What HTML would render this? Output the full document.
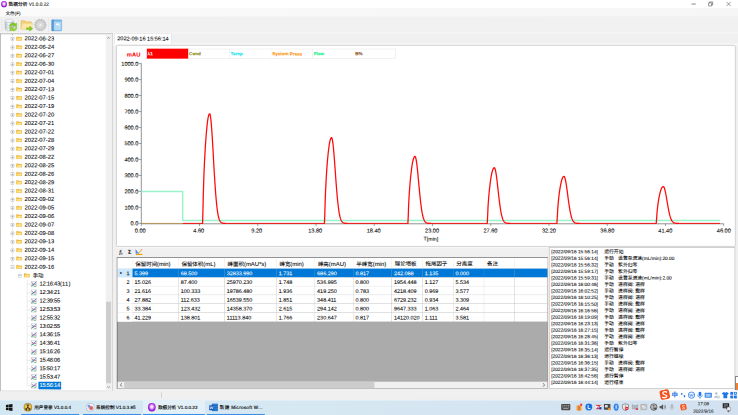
<!DOCTYPE html><html lang="zh-CN"><head><meta charset="utf-8"><title>数据分析 V1.0.0.22</title><style>
*{box-sizing:border-box;margin:0;padding:0}
html,body{width:738px;height:415px;overflow:hidden;background:#f0f0f0}
body{font-family:"Liberation Sans","Noto Sans CJK SC",sans-serif;color:#000;text-rendering:geometricPrecision;-webkit-text-stroke-width:0.18px}
#app{position:absolute;left:0;top:0;width:1920px;height:1080px;transform:scale(0.384375);transform-origin:0 0;background:#f0f0f0;overflow:hidden}
.abs{position:absolute}
.t,.tr,.yl,.xl,.ll,.r{transform:rotate(0.1deg);transform-origin:0 50%}
.r{display:inline-block}
.t{position:absolute;white-space:nowrap;line-height:1}
#title{left:0;top:0;width:1920px;height:21px;background:#fff}
#menu{left:0;top:21px;width:1920px;height:23px;background:linear-gradient(90deg,#fbfbfb,#f7f7f7 60%,#f6f6f6)}
#tool{left:0;top:43px;width:1920px;height:44px;background:#f1f1f1;border-bottom:2px solid #fafafa}
#tree{left:0;top:87px;width:294px;height:931px;background:#fff;border:2px solid #acacac;border-right:2px solid #c0c0c0;border-bottom:2px solid #d8d8d8}
.tr{position:absolute;left:0;height:22px;font-size:15px;line-height:22px;white-space:nowrap}
.pm{position:absolute;width:9px;height:9px;border:1px solid #a8a8a8;background:#fff}
.pm:before{content:"";position:absolute;left:1px;top:3px;width:5px;height:1px;background:#5a6da8}
.pm.plus:after{content:"";position:absolute;left:3px;top:1px;width:1px;height:5px;background:#5a6da8}
.fold{position:absolute;width:16px;height:12px}
.dot{position:absolute;border-left:1px dotted #a0a0a0}
.doth{position:absolute;border-top:1px dotted #a0a0a0}
.sb{background:#f0f0f0}
.thumb{background:#cdcdcd}
#tab{left:298px;top:87px;width:148px;height:28px;background:#fff;border:1px solid #d0d0d0;border-bottom:none;font-size:13.5px}
#chart{left:302px;top:117px;width:1612px;height:525px;background:#fff;border:2px solid #c8c8c8;border-radius:3px}
.yl{position:absolute;font-size:14.5px;line-height:14px;width:60px;text-align:right;white-space:nowrap}
.xl{position:absolute;font-size:14.5px;line-height:14px;width:80px;text-align:center;white-space:nowrap}
.lg{position:absolute;top:127px;height:25px;width:108px;border:1px solid #dcdcdc;border-left:none;font-size:12px;font-weight:bold;line-height:25px;padding-left:2px;white-space:nowrap;background:#fff}
#grid{left:304px;top:669px;width:1121px;height:342px;background:#ababab;border:1px solid #6e6e6e;border-left:2px solid #6e6e6e;border-top:2px solid #6e6e6e}
.hc{position:absolute;top:0;height:28px;background:#fff;border-right:1px solid #dedede;border-bottom:1px solid #dedede;font-size:14.2px;line-height:33px;text-align:left;padding-left:7px;white-space:nowrap;overflow:hidden}
.c{position:absolute;height:23px;background:#fff;border-right:1px solid #a9a9a9;border-bottom:1px solid #a9a9a9;font-size:14.1px;line-height:24px;padding-left:5px;white-space:nowrap;overflow:hidden}
.c.sel{background:#0078d7;color:#fff}
.rh{position:absolute;left:0;width:39px;height:23px;background:#fff;border-right:1px solid #dedede;border-bottom:1px solid #dedede;font-size:14.1px;line-height:24px;text-align:right;padding-right:7px}
.la{font-size:15.4px}
#log{left:1428px;top:643px;width:485px;height:369px;background:#fff;border:2px solid #c4c4c4}
.ll{position:absolute;left:4px;font-size:12.5px;line-height:17px;height:17px;white-space:pre}
#status{left:0;top:1020px;width:1920px;height:20px;background:#f0f0f0}
#task{left:0;top:1040px;width:1920px;height:40px;background:linear-gradient(90deg,#d3e7f2 0%,#d6e8f2 40%,#d5e4f1 70%,#d2e0f0 100%)}
.tb{position:absolute;top:0;height:40px;width:161px}
.tb i{position:absolute;left:5px;right:5px;bottom:0;height:3px;background:#3a8fe2}
.tb.act i{left:0;right:0}
.tb .t{top:14px;font-size:12px;left:39px;-webkit-text-stroke-width:0.3px}
</style></head><body><div id="app"><div id="title" class="abs"><svg class="abs" style="left:2px;top:2px" width="17" height="18" viewBox="0 0 17 18"><defs><radialGradient id="pg" cx="50%" cy="45%" r="55%"><stop offset="0" stop-color="#fff"/><stop offset="0.35" stop-color="#e9b8ff"/><stop offset="0.75" stop-color="#a324e0"/><stop offset="1" stop-color="#7a12b8"/></radialGradient></defs><ellipse cx="8.5" cy="9" rx="7.5" ry="8.5" fill="url(#pg)"/></svg><div class="t" style="left:22px;top:5px;font-size:12.3px;font-weight:500">数据分析 V1.0.0.22</div><svg class="abs" style="left:1790px;top:0" width="130" height="22" viewBox="0 0 130 22"><path d="M9 10.500h11" stroke="#444" stroke-width="1.700" fill="none"/><path d="M53.500 7.500h8v8h-8zM56 7.500v-2.500h8v8h-2.500" stroke="#444" stroke-width="1.400" fill="none"/><path d="M100 5l11 11M111 5l-11 11" stroke="#444" stroke-width="1.400" fill="none"/></svg></div><div id="menu" class="abs"><div class="t" style="left:14px;top:8px;font-size:12px">文件(F)</div></div><div id="tool" class="abs"><div class="abs" style="left:4px;top:7px;width:2px;height:30px;border-left:2px dotted #d2d2d2"></div><svg class="abs" style="left:10px;top:4px" width="36" height="36" viewBox="0 0 36 36">
<defs><linearGradient id="dbg" x1="0" x2="1"><stop offset="0" stop-color="#b6c2ce"/><stop offset="0.45" stop-color="#f4f7fa"/><stop offset="1" stop-color="#a9b6c3"/></linearGradient></defs>
<path d="M3 7v21c0 3 5 5 11 5s11-2 11-5V7z" fill="url(#dbg)" stroke="#a9b1b7" stroke-width="1"/>
<ellipse cx="14" cy="7" rx="11" ry="4.500" fill="#f1f4f6" stroke="#a9b1b7"/>
<path d="M3 14c0 3 5 5 11 5s11-2 11-5M3 21c0 3 5 5 11 5s11-2 11-5" fill="none" stroke="#b3bbc1"/>
<path d="M14.500 22a9.500 9.500 0 0 1 16-7l2.500-3 1 10-10-1 3-2.800a5 5 0 0 0-8 3.800z" fill="#84cc20" stroke="#5ea412" stroke-width=".7"/>
<path d="M34.500 24a9.500 9.500 0 0 1-16 7l-2.500 3-1-10 10 1-3 2.800a5 5 0 0 0 8-3.800z" fill="#98d838" stroke="#5ea412" stroke-width=".7"/>
</svg><div class="abs" style="left:47px;top:5px;width:1px;height:35px;background:#bebebe"></div><div class="abs" style="left:48px;top:5px;width:1px;height:35px;background:#fbfbfb"></div><svg class="abs" style="left:52px;top:4px" width="36" height="36" viewBox="0 0 36 36">
<path d="M2.500 6.500h10l3 3h14v19h-27z" fill="#f3cf72" stroke="#e0b654"/>
<path d="M2.500 28.500l4-15h27l-4 15z" fill="#fde9a6" stroke="#e8c56a"/>
<path d="M17 25h8v-4l8.500 6.500-8.500 6.500v-4h-8z" fill="#86cc22" stroke="#5ea412" stroke-width=".8"/>
</svg><svg class="abs" style="left:87px;top:4px" width="36" height="36" viewBox="0 0 36 36"><defs><radialGradient id="gg"><stop offset="0" stop-color="#ededed"/><stop offset="0.6" stop-color="#cfcfcf"/><stop offset="1" stop-color="#bdbdbd"/></radialGradient></defs><path d="M33.4 16.5 L33.4 19.5 L30.4 19.7 L29.9 21.9 L32.6 23.3 L31.2 26.1 L28.4 24.9 L27.0 26.6 L28.8 29.1 L26.4 31.0 L24.4 28.7 L22.4 29.7 L22.9 32.7 L19.9 33.4 L19.1 30.4 L16.9 30.4 L16.1 33.4 L13.1 32.7 L13.6 29.7 L11.6 28.7 L9.6 31.0 L7.2 29.1 L9.0 26.6 L7.6 24.9 L4.8 26.1 L3.4 23.3 L6.1 21.9 L5.6 19.7 L2.6 19.5 L2.6 16.5 L5.6 16.3 L6.1 14.1 L3.4 12.7 L4.8 9.9 L7.6 11.1 L9.0 9.4 L7.2 6.9 L9.6 5.0 L11.6 7.3 L13.6 6.3 L13.1 3.3 L16.1 2.6 L16.9 5.6 L19.1 5.6 L19.9 2.6 L22.9 3.3 L22.4 6.3 L24.4 7.3 L26.4 5.0 L28.8 6.9 L27.0 9.4 L28.4 11.1 L31.2 9.9 L32.6 12.7 L29.9 14.1 L30.4 16.3z" fill="url(#gg)" stroke="#b2b2b2" stroke-width="1"/><circle cx="18" cy="18" r="9.500" fill="none" stroke="#dcdcdc" stroke-width="1.500"/><circle cx="18" cy="18" r="3.200" fill="#fff" stroke="#bdbdbd"/></svg><div class="abs" style="left:125px;top:5px;width:1px;height:35px;background:#bebebe"></div><div class="abs" style="left:126px;top:5px;width:1px;height:35px;background:#fbfbfb"></div><svg class="abs" style="left:132px;top:6px" width="32" height="34" viewBox="0 0 32 34">
<rect x="2.500" y="2.500" width="26" height="29" rx="1.500" fill="#8cc6ee" stroke="#5d9fd8"/>
<rect x="8" y="3" width="20" height="3.500" fill="#74b4e6"/>
<rect x="9.500" y="8" width="16.500" height="21" fill="#b4dbf5"/>
<rect x="12.500" y="11" width="11" height="7" fill="#eef7fd" stroke="#8cbfe6" stroke-width=".8"/>
<rect x="2.500" y="2.500" width="5" height="29" fill="#4a8ccc"/>
<path d="M3.500 6h3M3.500 10h3M3.500 14h3M3.500 18h3M3.500 22h3M3.500 26h3" stroke="#9cc6ea" stroke-width="1"/>
</svg></div><div id="tree" class="abs"><div class="dot" style="left:30px;top:0px;height:606px"></div><div class="pm plus" style="left:26px;top:8px"></div><svg class="fold" style="left:40px;top:5px" preserveAspectRatio="none" viewBox="0 0 16 13"><path d="M0.500 2h5l1.500 1.500h7.500v8.500h-14z" fill="#f0ba40" stroke="#dea42c" stroke-width=".8"/><path d="M0.500 12l2.200-6.500h13l-2.200 6.500z" fill="#ffe078" stroke="#eab844" stroke-width=".8"/><path d="M4 8h9" stroke="#fff0b0" stroke-width="1.200"/></svg><div class="tr" style="left:62px;top:1px">2022-06-23</div><div class="pm plus" style="left:26px;top:30px"></div><svg class="fold" style="left:40px;top:27px" preserveAspectRatio="none" viewBox="0 0 16 13"><path d="M0.500 2h5l1.500 1.500h7.500v8.500h-14z" fill="#f0ba40" stroke="#dea42c" stroke-width=".8"/><path d="M0.500 12l2.200-6.500h13l-2.200 6.500z" fill="#ffe078" stroke="#eab844" stroke-width=".8"/><path d="M4 8h9" stroke="#fff0b0" stroke-width="1.200"/></svg><div class="tr" style="left:62px;top:23px">2022-06-24</div><div class="pm plus" style="left:26px;top:52px"></div><svg class="fold" style="left:40px;top:49px" preserveAspectRatio="none" viewBox="0 0 16 13"><path d="M0.500 2h5l1.500 1.500h7.500v8.500h-14z" fill="#f0ba40" stroke="#dea42c" stroke-width=".8"/><path d="M0.500 12l2.200-6.500h13l-2.200 6.500z" fill="#ffe078" stroke="#eab844" stroke-width=".8"/><path d="M4 8h9" stroke="#fff0b0" stroke-width="1.200"/></svg><div class="tr" style="left:62px;top:45px">2022-06-27</div><div class="pm plus" style="left:26px;top:74px"></div><svg class="fold" style="left:40px;top:71px" preserveAspectRatio="none" viewBox="0 0 16 13"><path d="M0.500 2h5l1.500 1.500h7.500v8.500h-14z" fill="#f0ba40" stroke="#dea42c" stroke-width=".8"/><path d="M0.500 12l2.200-6.500h13l-2.200 6.500z" fill="#ffe078" stroke="#eab844" stroke-width=".8"/><path d="M4 8h9" stroke="#fff0b0" stroke-width="1.200"/></svg><div class="tr" style="left:62px;top:67px">2022-06-30</div><div class="pm plus" style="left:26px;top:96px"></div><svg class="fold" style="left:40px;top:93px" preserveAspectRatio="none" viewBox="0 0 16 13"><path d="M0.500 2h5l1.500 1.500h7.500v8.500h-14z" fill="#f0ba40" stroke="#dea42c" stroke-width=".8"/><path d="M0.500 12l2.200-6.500h13l-2.200 6.500z" fill="#ffe078" stroke="#eab844" stroke-width=".8"/><path d="M4 8h9" stroke="#fff0b0" stroke-width="1.200"/></svg><div class="tr" style="left:62px;top:89px">2022-07-01</div><div class="pm plus" style="left:26px;top:118px"></div><svg class="fold" style="left:40px;top:115px" preserveAspectRatio="none" viewBox="0 0 16 13"><path d="M0.500 2h5l1.500 1.500h7.500v8.500h-14z" fill="#f0ba40" stroke="#dea42c" stroke-width=".8"/><path d="M0.500 12l2.200-6.500h13l-2.200 6.500z" fill="#ffe078" stroke="#eab844" stroke-width=".8"/><path d="M4 8h9" stroke="#fff0b0" stroke-width="1.200"/></svg><div class="tr" style="left:62px;top:111px">2022-07-04</div><div class="pm plus" style="left:26px;top:140px"></div><svg class="fold" style="left:40px;top:137px" preserveAspectRatio="none" viewBox="0 0 16 13"><path d="M0.500 2h5l1.500 1.500h7.500v8.500h-14z" fill="#f0ba40" stroke="#dea42c" stroke-width=".8"/><path d="M0.500 12l2.200-6.500h13l-2.200 6.500z" fill="#ffe078" stroke="#eab844" stroke-width=".8"/><path d="M4 8h9" stroke="#fff0b0" stroke-width="1.200"/></svg><div class="tr" style="left:62px;top:133px">2022-07-13</div><div class="pm plus" style="left:26px;top:162px"></div><svg class="fold" style="left:40px;top:159px" preserveAspectRatio="none" viewBox="0 0 16 13"><path d="M0.500 2h5l1.500 1.500h7.500v8.500h-14z" fill="#f0ba40" stroke="#dea42c" stroke-width=".8"/><path d="M0.500 12l2.200-6.500h13l-2.200 6.500z" fill="#ffe078" stroke="#eab844" stroke-width=".8"/><path d="M4 8h9" stroke="#fff0b0" stroke-width="1.200"/></svg><div class="tr" style="left:62px;top:155px">2022-07-15</div><div class="pm plus" style="left:26px;top:184px"></div><svg class="fold" style="left:40px;top:181px" preserveAspectRatio="none" viewBox="0 0 16 13"><path d="M0.500 2h5l1.500 1.500h7.500v8.500h-14z" fill="#f0ba40" stroke="#dea42c" stroke-width=".8"/><path d="M0.500 12l2.200-6.500h13l-2.200 6.500z" fill="#ffe078" stroke="#eab844" stroke-width=".8"/><path d="M4 8h9" stroke="#fff0b0" stroke-width="1.200"/></svg><div class="tr" style="left:62px;top:177px">2022-07-19</div><div class="pm plus" style="left:26px;top:206px"></div><svg class="fold" style="left:40px;top:203px" preserveAspectRatio="none" viewBox="0 0 16 13"><path d="M0.500 2h5l1.500 1.500h7.500v8.500h-14z" fill="#f0ba40" stroke="#dea42c" stroke-width=".8"/><path d="M0.500 12l2.200-6.500h13l-2.200 6.500z" fill="#ffe078" stroke="#eab844" stroke-width=".8"/><path d="M4 8h9" stroke="#fff0b0" stroke-width="1.200"/></svg><div class="tr" style="left:62px;top:199px">2022-07-20</div><div class="pm plus" style="left:26px;top:228px"></div><svg class="fold" style="left:40px;top:225px" preserveAspectRatio="none" viewBox="0 0 16 13"><path d="M0.500 2h5l1.500 1.500h7.500v8.500h-14z" fill="#f0ba40" stroke="#dea42c" stroke-width=".8"/><path d="M0.500 12l2.200-6.500h13l-2.200 6.500z" fill="#ffe078" stroke="#eab844" stroke-width=".8"/><path d="M4 8h9" stroke="#fff0b0" stroke-width="1.200"/></svg><div class="tr" style="left:62px;top:221px">2022-07-21</div><div class="pm plus" style="left:26px;top:250px"></div><svg class="fold" style="left:40px;top:247px" preserveAspectRatio="none" viewBox="0 0 16 13"><path d="M0.500 2h5l1.500 1.500h7.500v8.500h-14z" fill="#f0ba40" stroke="#dea42c" stroke-width=".8"/><path d="M0.500 12l2.200-6.500h13l-2.200 6.500z" fill="#ffe078" stroke="#eab844" stroke-width=".8"/><path d="M4 8h9" stroke="#fff0b0" stroke-width="1.200"/></svg><div class="tr" style="left:62px;top:243px">2022-07-22</div><div class="pm plus" style="left:26px;top:272px"></div><svg class="fold" style="left:40px;top:269px" preserveAspectRatio="none" viewBox="0 0 16 13"><path d="M0.500 2h5l1.500 1.500h7.500v8.500h-14z" fill="#f0ba40" stroke="#dea42c" stroke-width=".8"/><path d="M0.500 12l2.200-6.500h13l-2.200 6.500z" fill="#ffe078" stroke="#eab844" stroke-width=".8"/><path d="M4 8h9" stroke="#fff0b0" stroke-width="1.200"/></svg><div class="tr" style="left:62px;top:265px">2022-07-28</div><div class="pm plus" style="left:26px;top:294px"></div><svg class="fold" style="left:40px;top:291px" preserveAspectRatio="none" viewBox="0 0 16 13"><path d="M0.500 2h5l1.500 1.500h7.500v8.500h-14z" fill="#f0ba40" stroke="#dea42c" stroke-width=".8"/><path d="M0.500 12l2.200-6.500h13l-2.200 6.500z" fill="#ffe078" stroke="#eab844" stroke-width=".8"/><path d="M4 8h9" stroke="#fff0b0" stroke-width="1.200"/></svg><div class="tr" style="left:62px;top:287px">2022-07-29</div><div class="pm plus" style="left:26px;top:316px"></div><svg class="fold" style="left:40px;top:313px" preserveAspectRatio="none" viewBox="0 0 16 13"><path d="M0.500 2h5l1.500 1.500h7.500v8.500h-14z" fill="#f0ba40" stroke="#dea42c" stroke-width=".8"/><path d="M0.500 12l2.200-6.500h13l-2.200 6.500z" fill="#ffe078" stroke="#eab844" stroke-width=".8"/><path d="M4 8h9" stroke="#fff0b0" stroke-width="1.200"/></svg><div class="tr" style="left:62px;top:309px">2022-08-22</div><div class="pm plus" style="left:26px;top:338px"></div><svg class="fold" style="left:40px;top:335px" preserveAspectRatio="none" viewBox="0 0 16 13"><path d="M0.500 2h5l1.500 1.500h7.500v8.500h-14z" fill="#f0ba40" stroke="#dea42c" stroke-width=".8"/><path d="M0.500 12l2.200-6.500h13l-2.200 6.500z" fill="#ffe078" stroke="#eab844" stroke-width=".8"/><path d="M4 8h9" stroke="#fff0b0" stroke-width="1.200"/></svg><div class="tr" style="left:62px;top:331px">2022-08-25</div><div class="pm plus" style="left:26px;top:360px"></div><svg class="fold" style="left:40px;top:357px" preserveAspectRatio="none" viewBox="0 0 16 13"><path d="M0.500 2h5l1.500 1.500h7.500v8.500h-14z" fill="#f0ba40" stroke="#dea42c" stroke-width=".8"/><path d="M0.500 12l2.200-6.500h13l-2.200 6.500z" fill="#ffe078" stroke="#eab844" stroke-width=".8"/><path d="M4 8h9" stroke="#fff0b0" stroke-width="1.200"/></svg><div class="tr" style="left:62px;top:353px">2022-08-26</div><div class="pm plus" style="left:26px;top:382px"></div><svg class="fold" style="left:40px;top:379px" preserveAspectRatio="none" viewBox="0 0 16 13"><path d="M0.500 2h5l1.500 1.500h7.500v8.500h-14z" fill="#f0ba40" stroke="#dea42c" stroke-width=".8"/><path d="M0.500 12l2.200-6.500h13l-2.200 6.500z" fill="#ffe078" stroke="#eab844" stroke-width=".8"/><path d="M4 8h9" stroke="#fff0b0" stroke-width="1.200"/></svg><div class="tr" style="left:62px;top:375px">2022-08-29</div><div class="pm plus" style="left:26px;top:404px"></div><svg class="fold" style="left:40px;top:401px" preserveAspectRatio="none" viewBox="0 0 16 13"><path d="M0.500 2h5l1.500 1.500h7.500v8.500h-14z" fill="#f0ba40" stroke="#dea42c" stroke-width=".8"/><path d="M0.500 12l2.200-6.500h13l-2.200 6.500z" fill="#ffe078" stroke="#eab844" stroke-width=".8"/><path d="M4 8h9" stroke="#fff0b0" stroke-width="1.200"/></svg><div class="tr" style="left:62px;top:397px">2022-08-31</div><div class="pm plus" style="left:26px;top:426px"></div><svg class="fold" style="left:40px;top:423px" preserveAspectRatio="none" viewBox="0 0 16 13"><path d="M0.500 2h5l1.500 1.500h7.500v8.500h-14z" fill="#f0ba40" stroke="#dea42c" stroke-width=".8"/><path d="M0.500 12l2.200-6.500h13l-2.200 6.500z" fill="#ffe078" stroke="#eab844" stroke-width=".8"/><path d="M4 8h9" stroke="#fff0b0" stroke-width="1.200"/></svg><div class="tr" style="left:62px;top:419px">2022-09-02</div><div class="pm plus" style="left:26px;top:448px"></div><svg class="fold" style="left:40px;top:445px" preserveAspectRatio="none" viewBox="0 0 16 13"><path d="M0.500 2h5l1.500 1.500h7.500v8.500h-14z" fill="#f0ba40" stroke="#dea42c" stroke-width=".8"/><path d="M0.500 12l2.200-6.500h13l-2.200 6.500z" fill="#ffe078" stroke="#eab844" stroke-width=".8"/><path d="M4 8h9" stroke="#fff0b0" stroke-width="1.200"/></svg><div class="tr" style="left:62px;top:441px">2022-09-05</div><div class="pm plus" style="left:26px;top:470px"></div><svg class="fold" style="left:40px;top:467px" preserveAspectRatio="none" viewBox="0 0 16 13"><path d="M0.500 2h5l1.500 1.500h7.500v8.500h-14z" fill="#f0ba40" stroke="#dea42c" stroke-width=".8"/><path d="M0.500 12l2.200-6.500h13l-2.200 6.500z" fill="#ffe078" stroke="#eab844" stroke-width=".8"/><path d="M4 8h9" stroke="#fff0b0" stroke-width="1.200"/></svg><div class="tr" style="left:62px;top:463px">2022-09-06</div><div class="pm plus" style="left:26px;top:492px"></div><svg class="fold" style="left:40px;top:489px" preserveAspectRatio="none" viewBox="0 0 16 13"><path d="M0.500 2h5l1.500 1.500h7.500v8.500h-14z" fill="#f0ba40" stroke="#dea42c" stroke-width=".8"/><path d="M0.500 12l2.200-6.500h13l-2.200 6.500z" fill="#ffe078" stroke="#eab844" stroke-width=".8"/><path d="M4 8h9" stroke="#fff0b0" stroke-width="1.200"/></svg><div class="tr" style="left:62px;top:485px">2022-09-07</div><div class="pm plus" style="left:26px;top:514px"></div><svg class="fold" style="left:40px;top:511px" preserveAspectRatio="none" viewBox="0 0 16 13"><path d="M0.500 2h5l1.500 1.500h7.500v8.500h-14z" fill="#f0ba40" stroke="#dea42c" stroke-width=".8"/><path d="M0.500 12l2.200-6.500h13l-2.200 6.500z" fill="#ffe078" stroke="#eab844" stroke-width=".8"/><path d="M4 8h9" stroke="#fff0b0" stroke-width="1.200"/></svg><div class="tr" style="left:62px;top:507px">2022-09-08</div><div class="pm plus" style="left:26px;top:536px"></div><svg class="fold" style="left:40px;top:533px" preserveAspectRatio="none" viewBox="0 0 16 13"><path d="M0.500 2h5l1.500 1.500h7.500v8.500h-14z" fill="#f0ba40" stroke="#dea42c" stroke-width=".8"/><path d="M0.500 12l2.200-6.500h13l-2.200 6.500z" fill="#ffe078" stroke="#eab844" stroke-width=".8"/><path d="M4 8h9" stroke="#fff0b0" stroke-width="1.200"/></svg><div class="tr" style="left:62px;top:529px">2022-09-13</div><div class="pm plus" style="left:26px;top:558px"></div><svg class="fold" style="left:40px;top:555px" preserveAspectRatio="none" viewBox="0 0 16 13"><path d="M0.500 2h5l1.500 1.500h7.500v8.500h-14z" fill="#f0ba40" stroke="#dea42c" stroke-width=".8"/><path d="M0.500 12l2.200-6.500h13l-2.200 6.500z" fill="#ffe078" stroke="#eab844" stroke-width=".8"/><path d="M4 8h9" stroke="#fff0b0" stroke-width="1.200"/></svg><div class="tr" style="left:62px;top:551px">2022-09-14</div><div class="pm plus" style="left:26px;top:580px"></div><svg class="fold" style="left:40px;top:577px" preserveAspectRatio="none" viewBox="0 0 16 13"><path d="M0.500 2h5l1.500 1.500h7.500v8.500h-14z" fill="#f0ba40" stroke="#dea42c" stroke-width=".8"/><path d="M0.500 12l2.200-6.500h13l-2.200 6.500z" fill="#ffe078" stroke="#eab844" stroke-width=".8"/><path d="M4 8h9" stroke="#fff0b0" stroke-width="1.200"/></svg><div class="tr" style="left:62px;top:573px">2022-09-15</div><div class="pm " style="left:26px;top:602px"></div><svg class="fold" style="left:40px;top:599px" preserveAspectRatio="none" viewBox="0 0 16 13"><path d="M0.500 2h5l1.500 1.500h7.500v8.500h-14z" fill="#f0ba40" stroke="#dea42c" stroke-width=".8"/><path d="M0.500 12l2.200-6.500h13l-2.200 6.500z" fill="#ffe078" stroke="#eab844" stroke-width=".8"/><path d="M4 8h9" stroke="#fff0b0" stroke-width="1.200"/></svg><div class="tr" style="left:62px;top:595px">2022-09-16</div><div class="dot" style="left:49px;top:617px;height:8px"></div><div class="pm" style="left:45px;top:624px"></div><svg class="fold" style="left:60px;top:621px" preserveAspectRatio="none" viewBox="0 0 16 13"><path d="M0.500 2h5l1.500 1.500h7.500v8.500h-14z" fill="#f0ba40" stroke="#dea42c" stroke-width=".8"/><path d="M0.500 12l2.200-6.500h13l-2.200 6.500z" fill="#ffe078" stroke="#eab844" stroke-width=".8"/><path d="M4 8h9" stroke="#fff0b0" stroke-width="1.200"/></svg><div class="tr" style="left:83px;top:618px;font-size:14.2px">手动</div><div class="dot" style="left:68px;top:639px;height:275px"></div><div class="doth" style="left:69px;top:650px;width:9px"></div><svg class="abs" style="left:78px;top:642px" width="16" height="16" viewBox="0 0 16 16"><rect x=".5" y=".5" width="15" height="15" fill="#f6f8fa" stroke="#a8aeb4"/><path d="M2 4l5 4 7 1" fill="none" stroke="#d83c3c" stroke-width="1.800"/><path d="M2 11l4-1 4 4h4" fill="none" stroke="#38a848" stroke-width="1.600"/><path d="M2 14L7 8l3-1 4-5" fill="none" stroke="#2f7be0" stroke-width="2.200"/></svg><div class="tr" style="left:101px;top:639px;letter-spacing:-0.7px">12:16:43<span style=letter-spacing:.6px>(11)</span></div><div class="doth" style="left:69px;top:672px;width:9px"></div><svg class="abs" style="left:78px;top:664px" width="16" height="16" viewBox="0 0 16 16"><rect x=".5" y=".5" width="15" height="15" fill="#f6f8fa" stroke="#a8aeb4"/><path d="M2 4l5 4 7 1" fill="none" stroke="#d83c3c" stroke-width="1.800"/><path d="M2 11l4-1 4 4h4" fill="none" stroke="#38a848" stroke-width="1.600"/><path d="M2 14L7 8l3-1 4-5" fill="none" stroke="#2f7be0" stroke-width="2.200"/></svg><div class="tr" style="left:101px;top:661px;letter-spacing:-0.7px">12:34:21</div><div class="doth" style="left:69px;top:694px;width:9px"></div><svg class="abs" style="left:78px;top:686px" width="16" height="16" viewBox="0 0 16 16"><rect x=".5" y=".5" width="15" height="15" fill="#f6f8fa" stroke="#a8aeb4"/><path d="M2 4l5 4 7 1" fill="none" stroke="#d83c3c" stroke-width="1.800"/><path d="M2 11l4-1 4 4h4" fill="none" stroke="#38a848" stroke-width="1.600"/><path d="M2 14L7 8l3-1 4-5" fill="none" stroke="#2f7be0" stroke-width="2.200"/></svg><div class="tr" style="left:101px;top:683px;letter-spacing:-0.7px">12:39:55</div><div class="doth" style="left:69px;top:716px;width:9px"></div><svg class="abs" style="left:78px;top:708px" width="16" height="16" viewBox="0 0 16 16"><rect x=".5" y=".5" width="15" height="15" fill="#f6f8fa" stroke="#a8aeb4"/><path d="M2 4l5 4 7 1" fill="none" stroke="#d83c3c" stroke-width="1.800"/><path d="M2 11l4-1 4 4h4" fill="none" stroke="#38a848" stroke-width="1.600"/><path d="M2 14L7 8l3-1 4-5" fill="none" stroke="#2f7be0" stroke-width="2.200"/></svg><div class="tr" style="left:101px;top:705px;letter-spacing:-0.7px">12:53:53</div><div class="doth" style="left:69px;top:738px;width:9px"></div><svg class="abs" style="left:78px;top:730px" width="16" height="16" viewBox="0 0 16 16"><rect x=".5" y=".5" width="15" height="15" fill="#f6f8fa" stroke="#a8aeb4"/><path d="M2 4l5 4 7 1" fill="none" stroke="#d83c3c" stroke-width="1.800"/><path d="M2 11l4-1 4 4h4" fill="none" stroke="#38a848" stroke-width="1.600"/><path d="M2 14L7 8l3-1 4-5" fill="none" stroke="#2f7be0" stroke-width="2.200"/></svg><div class="tr" style="left:101px;top:727px;letter-spacing:-0.7px">12:55:32</div><div class="doth" style="left:69px;top:760px;width:9px"></div><svg class="abs" style="left:78px;top:752px" width="16" height="16" viewBox="0 0 16 16"><rect x=".5" y=".5" width="15" height="15" fill="#f6f8fa" stroke="#a8aeb4"/><path d="M2 4l5 4 7 1" fill="none" stroke="#d83c3c" stroke-width="1.800"/><path d="M2 11l4-1 4 4h4" fill="none" stroke="#38a848" stroke-width="1.600"/><path d="M2 14L7 8l3-1 4-5" fill="none" stroke="#2f7be0" stroke-width="2.200"/></svg><div class="tr" style="left:101px;top:749px;letter-spacing:-0.7px">13:02:55</div><div class="doth" style="left:69px;top:782px;width:9px"></div><svg class="abs" style="left:78px;top:774px" width="16" height="16" viewBox="0 0 16 16"><rect x=".5" y=".5" width="15" height="15" fill="#f6f8fa" stroke="#a8aeb4"/><path d="M2 4l5 4 7 1" fill="none" stroke="#d83c3c" stroke-width="1.800"/><path d="M2 11l4-1 4 4h4" fill="none" stroke="#38a848" stroke-width="1.600"/><path d="M2 14L7 8l3-1 4-5" fill="none" stroke="#2f7be0" stroke-width="2.200"/></svg><div class="tr" style="left:101px;top:771px;letter-spacing:-0.7px">14:36:15</div><div class="doth" style="left:69px;top:804px;width:9px"></div><svg class="abs" style="left:78px;top:796px" width="16" height="16" viewBox="0 0 16 16"><rect x=".5" y=".5" width="15" height="15" fill="#f6f8fa" stroke="#a8aeb4"/><path d="M2 4l5 4 7 1" fill="none" stroke="#d83c3c" stroke-width="1.800"/><path d="M2 11l4-1 4 4h4" fill="none" stroke="#38a848" stroke-width="1.600"/><path d="M2 14L7 8l3-1 4-5" fill="none" stroke="#2f7be0" stroke-width="2.200"/></svg><div class="tr" style="left:101px;top:793px;letter-spacing:-0.7px">14:36:41</div><div class="doth" style="left:69px;top:826px;width:9px"></div><svg class="abs" style="left:78px;top:818px" width="16" height="16" viewBox="0 0 16 16"><rect x=".5" y=".5" width="15" height="15" fill="#f6f8fa" stroke="#a8aeb4"/><path d="M2 4l5 4 7 1" fill="none" stroke="#d83c3c" stroke-width="1.800"/><path d="M2 11l4-1 4 4h4" fill="none" stroke="#38a848" stroke-width="1.600"/><path d="M2 14L7 8l3-1 4-5" fill="none" stroke="#2f7be0" stroke-width="2.200"/></svg><div class="tr" style="left:101px;top:815px;letter-spacing:-0.7px">15:16:26</div><div class="doth" style="left:69px;top:848px;width:9px"></div><svg class="abs" style="left:78px;top:840px" width="16" height="16" viewBox="0 0 16 16"><rect x=".5" y=".5" width="15" height="15" fill="#f6f8fa" stroke="#a8aeb4"/><path d="M2 4l5 4 7 1" fill="none" stroke="#d83c3c" stroke-width="1.800"/><path d="M2 11l4-1 4 4h4" fill="none" stroke="#38a848" stroke-width="1.600"/><path d="M2 14L7 8l3-1 4-5" fill="none" stroke="#2f7be0" stroke-width="2.200"/></svg><div class="tr" style="left:101px;top:837px;letter-spacing:-0.7px">15:48:06</div><div class="doth" style="left:69px;top:870px;width:9px"></div><svg class="abs" style="left:78px;top:862px" width="16" height="16" viewBox="0 0 16 16"><rect x=".5" y=".5" width="15" height="15" fill="#f6f8fa" stroke="#a8aeb4"/><path d="M2 4l5 4 7 1" fill="none" stroke="#d83c3c" stroke-width="1.800"/><path d="M2 11l4-1 4 4h4" fill="none" stroke="#38a848" stroke-width="1.600"/><path d="M2 14L7 8l3-1 4-5" fill="none" stroke="#2f7be0" stroke-width="2.200"/></svg><div class="tr" style="left:101px;top:859px;letter-spacing:-0.7px">15:50:17</div><div class="doth" style="left:69px;top:892px;width:9px"></div><svg class="abs" style="left:78px;top:884px" width="16" height="16" viewBox="0 0 16 16"><rect x=".5" y=".5" width="15" height="15" fill="#f6f8fa" stroke="#a8aeb4"/><path d="M2 4l5 4 7 1" fill="none" stroke="#d83c3c" stroke-width="1.800"/><path d="M2 11l4-1 4 4h4" fill="none" stroke="#38a848" stroke-width="1.600"/><path d="M2 14L7 8l3-1 4-5" fill="none" stroke="#2f7be0" stroke-width="2.200"/></svg><div class="tr" style="left:101px;top:881px;letter-spacing:-0.7px">15:53:47</div><div class="doth" style="left:69px;top:914px;width:9px"></div><svg class="abs" style="left:78px;top:906px" width="16" height="16" viewBox="0 0 16 16"><rect x=".5" y=".5" width="15" height="15" fill="#f6f8fa" stroke="#a8aeb4"/><path d="M2 4l5 4 7 1" fill="none" stroke="#d83c3c" stroke-width="1.800"/><path d="M2 11l4-1 4 4h4" fill="none" stroke="#38a848" stroke-width="1.600"/><path d="M2 14L7 8l3-1 4-5" fill="none" stroke="#2f7be0" stroke-width="2.200"/></svg><div class="tr" style="left:98px;top:903px;background:#0078d7;color:#fff;padding:0 3px;height:20px;line-height:20px;margin-top:1px;letter-spacing:-0.7px">15:56:14</div><div class="abs sb" style="left:273px;top:0;width:17px;height:928px"></div><div class="abs thumb" style="left:274px;top:696px;width:13px;height:212px"></div><svg class="abs" style="left:276px;top:6px" width="9" height="7" viewBox="0 0 11 8"><path d="M1 6.500l4.500-4.500 4.500 4.500" fill="none" stroke="#505050" stroke-width="1.800"/></svg><svg class="abs" style="left:276px;top:915px" width="9" height="7" viewBox="0 0 11 8"><path d="M1 1.500l4.500 4.500 4.500-4.500" fill="none" stroke="#505050" stroke-width="1.800"/></svg></div><div class="abs" style="left:294px;top:89px;width:5px;height:26px;background:#f7f7f7"></div><div class="abs" style="left:294px;top:113px;width:1626px;height:5px;background:#f8f8f8"></div><div id="tab" class="abs"><div class="t" style="left:6px;top:6px;font-size:14.4px">2022-09-16 15:56:14</div></div><div id="chart" class="abs"></div><div class="t" style="left:330px;top:135px;font-size:15px;font-weight:bold;color:#f00">mAU</div><div class="lg" style="left:382px;color:#fff;background:#ff0000;border-color:#ff0000;"><span class="r">λ1</span></div><div class="lg" style="left:490px;color:#808000;background:#fff;"><span class="r">Cond</span></div><div class="lg" style="left:598px;color:#00e5ee;background:#fff;"><span class="r">Temp</span></div><div class="lg" style="left:706px;color:#ff8c00;background:#fff;"><span class="r">System Press</span></div><div class="lg" style="left:814px;color:#00f080;background:#fff;"><span class="r">Flow</span></div><div class="lg" style="left:922px;color:#8b4513;background:#fff;"><span class="r">B%</span></div><svg class="abs" style="left:0;top:0" width="1920" height="1080" viewBox="0 0 1920 1080"><path d="M367.6 164.5V582.2" stroke="#404040" stroke-width="1.500" fill="none"/><path d="M367.6 581.2h-7M367.6 539.6h-7M367.6 498.1h-7M367.6 456.5h-7M367.6 414.9h-7M367.6 373.4h-7M367.6 331.8h-7M367.6 290.2h-7M367.6 248.6h-7M367.6 207.1h-7M367.6 165.5h-7" stroke="#404040" stroke-width="1.200" fill="none"/><path d="M367.6 582.2H1882.8" stroke="#404040" stroke-width="1.500" fill="none"/><path d="M367.6 582.2v6M519.1 582.2v6M670.6 582.2v6M822.2 582.2v6M973.7 582.2v6M1125.2 582.2v6M1276.7 582.2v6M1428.2 582.2v6M1579.8 582.2v6M1731.3 582.2v6M1882.8 582.2v6" stroke="#404040" stroke-width="1.200" fill="none"/><path d="M367.6 498.0H475.3V573.7H1873.2" stroke="#9af4ca" stroke-width="3.800" fill="none"/><path d="M367.6 581.2H475.3" stroke="#b88a40" stroke-width="2" fill="none"/><path d="M475.3 581.2H528.3M580.0 581.2H845.4M897.1 581.2H1062.5M1114.2 581.2H1268.9M1320.6 581.2H1450.1M1501.8 581.2H1708.5M1760.2 581.2H1873.2" stroke="#f01414" stroke-width="2.600" fill="none"/><path d="M527.0 581.2 L528.0 547.0 L529.0 502.8 L530.0 471.9 L530.9 446.4 L531.9 424.3 L532.9 404.8 L533.9 387.4 L534.9 371.8 L535.9 357.9 L536.9 345.5 L537.9 334.6 L538.9 325.1 L539.8 316.9 L540.8 310.1 L541.8 304.7 L542.8 300.5 L543.8 297.7 L544.8 296.2 L545.8 296.1 L546.8 298.5 L547.7 303.8 L548.7 311.8 L549.7 322.3 L550.7 334.9 L551.7 349.3 L552.7 365.2 L553.7 382.0 L554.7 399.4 L555.6 417.0 L556.6 434.4 L557.6 451.3 L558.6 467.4 L559.6 482.6 L560.6 496.6 L561.6 509.4 L562.6 520.9 L563.6 531.0 L564.5 539.9 L565.5 547.6 L566.5 554.1 L567.5 559.6 L568.5 564.1 L569.5 567.8 L570.5 570.9 L571.5 573.3 L572.4 575.2 L573.4 576.7 L574.4 577.9 L575.4 578.8 L576.4 579.4 L577.4 579.9 L578.4 580.3 L579.4 580.6 L580.4 580.8 L581.3 580.9 L582.3 581.0 L583.3 581.1 L584.3 581.1 L585.3 581.1 L586.3 581.2" stroke="#ff0a0a" stroke-width="3.300" fill="none" stroke-linejoin="round"/><path d="M844.1 581.2 L845.1 554.5 L846.1 519.9 L847.1 495.6 L848.1 475.7 L849.0 458.4 L850.0 443.2 L851.0 429.6 L852.0 417.4 L853.0 406.5 L854.0 396.8 L855.0 388.2 L856.0 380.8 L856.9 374.4 L857.9 369.1 L858.9 364.8 L859.9 361.6 L860.9 359.4 L861.9 358.2 L862.9 358.1 L863.9 360.0 L864.8 364.2 L865.8 370.4 L866.8 378.6 L867.8 388.5 L868.8 399.8 L869.8 412.2 L870.8 425.3 L871.8 438.9 L872.8 452.7 L873.7 466.3 L874.7 479.5 L875.7 492.2 L876.7 504.0 L877.7 515.0 L878.7 525.0 L879.7 534.0 L880.7 541.9 L881.6 548.9 L882.6 554.9 L883.6 560.0 L884.6 564.3 L885.6 567.8 L886.6 570.8 L887.6 573.1 L888.6 575.0 L889.6 576.5 L890.5 577.7 L891.5 578.6 L892.5 579.3 L893.5 579.8 L894.5 580.2 L895.5 580.5 L896.5 580.7 L897.5 580.8 L898.4 581.0 L899.4 581.0 L900.4 581.1 L901.4 581.1 L902.4 581.2 L903.4 581.2" stroke="#ff0a0a" stroke-width="3.300" fill="none" stroke-linejoin="round"/><path d="M1061.2 581.2 L1062.2 560.3 L1063.1 533.3 L1064.1 514.4 L1065.1 498.8 L1066.1 485.3 L1067.1 473.4 L1068.1 462.8 L1069.1 453.3 L1070.1 444.8 L1071.0 437.2 L1072.0 430.5 L1073.0 424.7 L1074.0 419.8 L1075.0 415.6 L1076.0 412.3 L1077.0 409.8 L1078.0 408.0 L1079.0 407.1 L1079.9 407.0 L1080.9 408.5 L1081.9 411.8 L1082.9 416.6 L1083.9 423.0 L1084.9 430.8 L1085.9 439.6 L1086.9 449.2 L1087.8 459.5 L1088.8 470.1 L1089.8 480.9 L1090.8 491.5 L1091.8 501.8 L1092.8 511.7 L1093.8 521.0 L1094.8 529.5 L1095.8 537.3 L1096.7 544.3 L1097.7 550.5 L1098.7 556.0 L1099.7 560.7 L1100.7 564.6 L1101.7 568.0 L1102.7 570.8 L1103.7 573.0 L1104.6 574.9 L1105.6 576.4 L1106.6 577.5 L1107.6 578.5 L1108.6 579.2 L1109.6 579.7 L1110.6 580.1 L1111.6 580.4 L1112.6 580.6 L1113.5 580.8 L1114.5 580.9 L1115.5 581.0 L1116.5 581.1 L1117.5 581.1 L1118.5 581.1 L1119.5 581.2 L1120.5 581.2" stroke="#ff0a0a" stroke-width="3.300" fill="none" stroke-linejoin="round"/><path d="M1267.6 581.2 L1268.6 563.9 L1269.5 541.4 L1270.5 525.7 L1271.5 512.7 L1272.5 501.5 L1273.5 491.6 L1274.5 482.8 L1275.5 474.9 L1276.5 467.8 L1277.4 461.5 L1278.4 456.0 L1279.4 451.2 L1280.4 447.0 L1281.4 443.6 L1282.4 440.8 L1283.4 438.7 L1284.4 437.3 L1285.4 436.5 L1286.3 436.4 L1287.3 437.7 L1288.3 440.4 L1289.3 444.5 L1290.3 449.8 L1291.3 456.2 L1292.3 463.5 L1293.3 471.5 L1294.2 480.1 L1295.2 488.9 L1296.2 497.8 L1297.2 506.7 L1298.2 515.2 L1299.2 523.4 L1300.2 531.1 L1301.2 538.3 L1302.1 544.7 L1303.1 550.6 L1304.1 555.7 L1305.1 560.2 L1306.1 564.1 L1307.1 567.4 L1308.1 570.2 L1309.1 572.5 L1310.1 574.4 L1311.0 576.0 L1312.0 577.2 L1313.0 578.2 L1314.0 578.9 L1315.0 579.5 L1316.0 580.0 L1317.0 580.3 L1318.0 580.5 L1318.9 580.7 L1319.9 580.9 L1320.9 581.0 L1321.9 581.0 L1322.9 581.1 L1323.9 581.1 L1324.9 581.2 L1325.9 581.2 L1326.9 581.2" stroke="#ff0a0a" stroke-width="3.300" fill="none" stroke-linejoin="round"/><path d="M1448.8 581.2 L1449.8 566.6 L1450.8 547.6 L1451.8 534.3 L1452.7 523.4 L1453.7 513.9 L1454.7 505.6 L1455.7 498.1 L1456.7 491.5 L1457.7 485.5 L1458.7 480.2 L1459.7 475.5 L1460.7 471.4 L1461.6 467.9 L1462.6 465.0 L1463.6 462.7 L1464.6 460.9 L1465.6 459.7 L1466.6 459.0 L1467.6 459.0 L1468.6 460.0 L1469.5 462.3 L1470.5 465.8 L1471.5 470.2 L1472.5 475.6 L1473.5 481.8 L1474.5 488.6 L1475.5 495.8 L1476.5 503.3 L1477.5 510.8 L1478.4 518.3 L1479.4 525.5 L1480.4 532.4 L1481.4 538.9 L1482.4 544.9 L1483.4 550.4 L1484.4 555.3 L1485.4 559.7 L1486.3 563.5 L1487.3 566.8 L1488.3 569.6 L1489.3 571.9 L1490.3 573.9 L1491.3 575.5 L1492.3 576.8 L1493.3 577.8 L1494.3 578.6 L1495.2 579.3 L1496.2 579.8 L1497.2 580.2 L1498.2 580.4 L1499.2 580.7 L1500.2 580.8 L1501.2 580.9 L1502.2 581.0 L1503.1 581.1 L1504.1 581.1 L1505.1 581.1 L1506.1 581.2 L1507.1 581.2 L1508.1 581.2" stroke="#ff0a0a" stroke-width="3.300" fill="none" stroke-linejoin="round"/><path d="M1707.2 581.2 L1708.2 569.7 L1709.2 554.9 L1710.2 544.5 L1711.2 535.9 L1712.1 528.5 L1713.1 521.9 L1714.1 516.1 L1715.1 510.8 L1716.1 506.2 L1717.1 502.0 L1718.1 498.3 L1719.1 495.1 L1720.0 492.4 L1721.0 490.1 L1722.0 488.3 L1723.0 486.9 L1724.0 485.9 L1725.0 485.4 L1726.0 485.4 L1727.0 486.2 L1728.0 488.0 L1728.9 490.7 L1729.9 494.2 L1730.9 498.4 L1731.9 503.3 L1732.9 508.6 L1733.9 514.2 L1734.9 520.1 L1735.9 526.0 L1736.8 531.9 L1737.8 537.5 L1738.8 543.0 L1739.8 548.1 L1740.8 552.8 L1741.8 557.1 L1742.8 560.9 L1743.8 564.3 L1744.8 567.3 L1745.7 569.9 L1746.7 572.1 L1747.7 573.9 L1748.7 575.5 L1749.7 576.7 L1750.7 577.7 L1751.7 578.5 L1752.7 579.2 L1753.6 579.7 L1754.6 580.1 L1755.6 580.4 L1756.6 580.6 L1757.6 580.8 L1758.6 580.9 L1759.6 581.0 L1760.6 581.0 L1761.6 581.1 L1762.5 581.1 L1763.5 581.2 L1764.5 581.2 L1765.5 581.2 L1766.5 581.2" stroke="#ff0a0a" stroke-width="3.300" fill="none" stroke-linejoin="round"/></svg><div class="yl" style="left:300px;top:575px">0.0</div><div class="yl" style="left:300px;top:534px">100.0</div><div class="yl" style="left:300px;top:492px">200.0</div><div class="yl" style="left:300px;top:450px">300.0</div><div class="yl" style="left:300px;top:409px">400.0</div><div class="yl" style="left:300px;top:367px">500.0</div><div class="yl" style="left:300px;top:326px">600.0</div><div class="yl" style="left:300px;top:284px">700.0</div><div class="yl" style="left:300px;top:243px">800.0</div><div class="yl" style="left:300px;top:201px">900.0</div><div class="yl" style="left:300px;top:160px">1000.0</div><div class="xl" style="left:325px;top:594px">0.00</div><div class="xl" style="left:477px;top:594px">4.60</div><div class="xl" style="left:628px;top:594px">9.20</div><div class="xl" style="left:780px;top:594px">13.80</div><div class="xl" style="left:932px;top:594px">18.40</div><div class="xl" style="left:1084px;top:594px">23.00</div><div class="xl" style="left:1236px;top:594px">27.60</div><div class="xl" style="left:1388px;top:594px">32.20</div><div class="xl" style="left:1540px;top:594px">36.80</div><div class="xl" style="left:1691px;top:594px">41.40</div><div class="xl" style="left:1843px;top:594px">46.00</div><div class="t" style="left:1102px;top:615px;font-size:13.7px">T[min]</div><div class="abs" style="left:302px;top:643px;width:1123px;height:3px;background:#f8f8f8"></div><div class="t" style="left:310px;top:649px;font-size:15px;font-style:italic;font-weight:bold;color:#3a3a3a;font-family:'Liberation Serif',serif">f<span style="font-size:10px;position:relative;top:2px;left:-1px">x</span></div><div class="t" style="left:333px;top:649px;font-size:14.5px;font-weight:bold;color:#111">Σ</div><svg class="abs" style="left:352px;top:647px" width="20" height="18" viewBox="0 0 20 18"><defs><linearGradient id="bt" x1="0" x2="1"><stop offset="0" stop-color="#2f6fe0"/><stop offset="1" stop-color="#8ab8f4"/></linearGradient></defs><path d="M0.500 0.500l9 12H0.500z" fill="url(#bt)"/><path d="M17 2l-8.500 9.500" stroke="#e8b030" stroke-width="2.600"/><path d="M17.500 1.500l-2 2.200" stroke="#e88a90" stroke-width="2.800"/><path d="M9.500 10.500l-2 2.500" stroke="#444" stroke-width="1.800"/><rect x="1.500" y="13.500" width="17" height="3.200" fill="#eaa400"/></svg><div id="grid" class="abs"><div class="abs" style="left:0;top:0;width:1118px;height:166px;background:#fff"></div><div class="abs" style="left:39px;top:28px;width:1079px;height:22px;background:#0078d7"></div><div class="hc" style="left:0px;width:39px"><span class="r"></span></div><div class="hc" style="left:39px;width:120px"><span class="r">保留时间<span class=la>(min)</span></span></div><div class="hc" style="left:159px;width:120px"><span class="r">保留体积<span class=la>(mL)</span></span></div><div class="hc" style="left:279px;width:135px"><span class="r">峰面积<span class=la>(mAU*s)</span></span></div><div class="hc" style="left:414px;width:100px"><span class="r">峰宽<span class=la>(min)</span></span></div><div class="hc" style="left:514px;width:100px"><span class="r">峰高<span class=la>(mAU)</span></span></div><div class="hc" style="left:614px;width:100px"><span class="r">半峰宽<span class=la>(min)</span></span></div><div class="hc" style="left:714px;width:80px"><span class="r">理论塔板</span></div><div class="hc" style="left:794px;width:80px"><span class="r">拖尾因子</span></div><div class="hc" style="left:874px;width:80px"><span class="r">分离度</span></div><div class="hc" style="left:954px;width:80px"><span class="r">备注</span></div><div class="hc" style="left:1034px;width:84px"><span class="r"></span></div><div class="rh" style="top:28px;background:#cce8ff"><span style="position:absolute;left:5px;top:0;font-size:9px">&#9658;</span><span class="r">1</span></div><div class="c sel" style="left:39px;top:28px;width:120px"><span class="r">5.399</span></div><div class="c sel" style="left:159px;top:28px;width:120px"><span class="r">68.500</span></div><div class="c sel" style="left:279px;top:28px;width:135px"><span class="r">32833.990</span></div><div class="c sel" style="left:414px;top:28px;width:100px"><span class="r">1.731</span></div><div class="c sel" style="left:514px;top:28px;width:100px"><span class="r">686.290</span></div><div class="c sel" style="left:614px;top:28px;width:100px"><span class="r">0.817</span></div><div class="c sel" style="left:714px;top:28px;width:80px"><span class="r">242.088</span></div><div class="c sel" style="left:794px;top:28px;width:80px"><span class="r">1.135</span></div><div class="c sel" style="left:874px;top:28px;width:80px"><span class="r">0.000</span></div><div class="c sel" style="left:954px;top:28px;width:80px"><span class="r"></span></div><div class="c sel" style="left:1034px;top:28px;width:84px"><span class="r"></span></div><div class="rh" style="top:51px"><span class="r">2</span></div><div class="c" style="left:39px;top:51px;width:120px"><span class="r">15.026</span></div><div class="c" style="left:159px;top:51px;width:120px"><span class="r">87.400</span></div><div class="c" style="left:279px;top:51px;width:135px"><span class="r">25970.230</span></div><div class="c" style="left:414px;top:51px;width:100px"><span class="r">1.748</span></div><div class="c" style="left:514px;top:51px;width:100px"><span class="r">536.995</span></div><div class="c" style="left:614px;top:51px;width:100px"><span class="r">0.800</span></div><div class="c" style="left:714px;top:51px;width:80px"><span class="r">1954.448</span></div><div class="c" style="left:794px;top:51px;width:80px"><span class="r">1.127</span></div><div class="c" style="left:874px;top:51px;width:80px"><span class="r">5.534</span></div><div class="c" style="left:954px;top:51px;width:80px"><span class="r"></span></div><div class="c" style="left:1034px;top:51px;width:84px"><span class="r"></span></div><div class="rh" style="top:74px"><span class="r">3</span></div><div class="c" style="left:39px;top:74px;width:120px"><span class="r">21.616</span></div><div class="c" style="left:159px;top:74px;width:120px"><span class="r">100.333</span></div><div class="c" style="left:279px;top:74px;width:135px"><span class="r">19786.480</span></div><div class="c" style="left:414px;top:74px;width:100px"><span class="r">1.936</span></div><div class="c" style="left:514px;top:74px;width:100px"><span class="r">419.250</span></div><div class="c" style="left:614px;top:74px;width:100px"><span class="r">0.783</span></div><div class="c" style="left:714px;top:74px;width:80px"><span class="r">4218.409</span></div><div class="c" style="left:794px;top:74px;width:80px"><span class="r">0.969</span></div><div class="c" style="left:874px;top:74px;width:80px"><span class="r">3.577</span></div><div class="c" style="left:954px;top:74px;width:80px"><span class="r"></span></div><div class="c" style="left:1034px;top:74px;width:84px"><span class="r"></span></div><div class="rh" style="top:97px"><span class="r">4</span></div><div class="c" style="left:39px;top:97px;width:120px"><span class="r">27.882</span></div><div class="c" style="left:159px;top:97px;width:120px"><span class="r">112.633</span></div><div class="c" style="left:279px;top:97px;width:135px"><span class="r">16539.550</span></div><div class="c" style="left:414px;top:97px;width:100px"><span class="r">1.851</span></div><div class="c" style="left:514px;top:97px;width:100px"><span class="r">348.411</span></div><div class="c" style="left:614px;top:97px;width:100px"><span class="r">0.800</span></div><div class="c" style="left:714px;top:97px;width:80px"><span class="r">6729.232</span></div><div class="c" style="left:794px;top:97px;width:80px"><span class="r">0.934</span></div><div class="c" style="left:874px;top:97px;width:80px"><span class="r">3.309</span></div><div class="c" style="left:954px;top:97px;width:80px"><span class="r"></span></div><div class="c" style="left:1034px;top:97px;width:84px"><span class="r"></span></div><div class="rh" style="top:120px"><span class="r">5</span></div><div class="c" style="left:39px;top:120px;width:120px"><span class="r">33.384</span></div><div class="c" style="left:159px;top:120px;width:120px"><span class="r">123.432</span></div><div class="c" style="left:279px;top:120px;width:135px"><span class="r">14358.370</span></div><div class="c" style="left:414px;top:120px;width:100px"><span class="r">2.615</span></div><div class="c" style="left:514px;top:120px;width:100px"><span class="r">294.142</span></div><div class="c" style="left:614px;top:120px;width:100px"><span class="r">0.800</span></div><div class="c" style="left:714px;top:120px;width:80px"><span class="r">9647.333</span></div><div class="c" style="left:794px;top:120px;width:80px"><span class="r">1.063</span></div><div class="c" style="left:874px;top:120px;width:80px"><span class="r">2.464</span></div><div class="c" style="left:954px;top:120px;width:80px"><span class="r"></span></div><div class="c" style="left:1034px;top:120px;width:84px"><span class="r"></span></div><div class="rh" style="top:143px"><span class="r">6</span></div><div class="c" style="left:39px;top:143px;width:120px"><span class="r">41.229</span></div><div class="c" style="left:159px;top:143px;width:120px"><span class="r">138.801</span></div><div class="c" style="left:279px;top:143px;width:135px"><span class="r">11113.840</span></div><div class="c" style="left:414px;top:143px;width:100px"><span class="r">1.766</span></div><div class="c" style="left:514px;top:143px;width:100px"><span class="r">230.647</span></div><div class="c" style="left:614px;top:143px;width:100px"><span class="r">0.817</span></div><div class="c" style="left:714px;top:143px;width:80px"><span class="r">14120.020</span></div><div class="c" style="left:794px;top:143px;width:80px"><span class="r">1.111</span></div><div class="c" style="left:874px;top:143px;width:80px"><span class="r">3.581</span></div><div class="c" style="left:954px;top:143px;width:80px"><span class="r"></span></div><div class="c" style="left:1034px;top:143px;width:84px"><span class="r"></span></div><div class="abs sb" style="left:0;top:322px;width:1118px;height:17px"></div><div class="abs thumb" style="left:17px;top:322px;width:651px;height:17px"></div><svg class="abs" style="left:5px;top:325px" width="8" height="11" viewBox="0 0 8 11"><path d="M6.500 1l-4.500 4.500 4.500 4.500" fill="none" stroke="#404040" stroke-width="1.800"/></svg><svg class="abs" style="left:1105px;top:325px" width="8" height="11" viewBox="0 0 8 11"><path d="M1.500 1l4.500 4.500-4.500 4.500" fill="none" stroke="#404040" stroke-width="1.800"/></svg></div><div id="log" class="abs"><div class="ll" style="top:2px">[2022/09/16 15:56:14]</div><div class="ll" style="left:142px;top:2px">运行开始</div><div class="ll" style="top:19px">[2022/09/16 15:56:14]</div><div class="ll" style="left:142px;top:19px">手动</div><div class="ll" style="left:178px;top:19px">设置泵流速(mL/min):20.00</div><div class="ll" style="top:36px">[2022/09/16 15:56:32]</div><div class="ll" style="left:142px;top:36px">手动</div><div class="ll" style="left:178px;top:36px">紫外归零</div><div class="ll" style="top:53px">[2022/09/16 15:59:17]</div><div class="ll" style="left:142px;top:53px">手动</div><div class="ll" style="left:178px;top:53px">紫外归零</div><div class="ll" style="top:70px">[2022/09/16 15:59:31]</div><div class="ll" style="left:142px;top:70px">手动</div><div class="ll" style="left:178px;top:70px">设置泵流速(mL/min):2.00</div><div class="ll" style="top:87px">[2022/09/16 16:00:46]</div><div class="ll" style="left:142px;top:87px">手动</div><div class="ll" style="left:178px;top:87px">进样阀: 进样</div><div class="ll" style="top:104px">[2022/09/16 16:02:52]</div><div class="ll" style="left:142px;top:104px">手动</div><div class="ll" style="left:178px;top:104px">进样阀: 载样</div><div class="ll" style="top:121px">[2022/09/16 16:10:25]</div><div class="ll" style="left:142px;top:121px">手动</div><div class="ll" style="left:178px;top:121px">进样阀: 进样</div><div class="ll" style="top:138px">[2022/09/16 16:15:50]</div><div class="ll" style="left:142px;top:138px">手动</div><div class="ll" style="left:178px;top:138px">进样阀: 载样</div><div class="ll" style="top:155px">[2022/09/16 16:16:56]</div><div class="ll" style="left:142px;top:155px">手动</div><div class="ll" style="left:178px;top:155px">进样阀: 进样</div><div class="ll" style="top:172px">[2022/09/16 16:19:09]</div><div class="ll" style="left:142px;top:172px">手动</div><div class="ll" style="left:178px;top:172px">进样阀: 载样</div><div class="ll" style="top:189px">[2022/09/16 16:23:13]</div><div class="ll" style="left:142px;top:189px">手动</div><div class="ll" style="left:178px;top:189px">进样阀: 进样</div><div class="ll" style="top:206px">[2022/09/16 16:27:15]</div><div class="ll" style="left:142px;top:206px">手动</div><div class="ll" style="left:178px;top:206px">进样阀: 载样</div><div class="ll" style="top:223px">[2022/09/16 16:28:45]</div><div class="ll" style="left:142px;top:223px">手动</div><div class="ll" style="left:178px;top:223px">进样阀: 进样</div><div class="ll" style="top:240px">[2022/09/16 16:31:36]</div><div class="ll" style="left:142px;top:240px">手动</div><div class="ll" style="left:178px;top:240px">紫外归零</div><div class="ll" style="top:257px">[2022/09/16 16:35:14]</div><div class="ll" style="left:142px;top:257px">运行暂停</div><div class="ll" style="top:274px">[2022/09/16 16:36:13]</div><div class="ll" style="left:142px;top:274px">运行继续</div><div class="ll" style="top:291px">[2022/09/16 16:36:15]</div><div class="ll" style="left:142px;top:291px">手动</div><div class="ll" style="left:178px;top:291px">进样阀: 载样</div><div class="ll" style="top:308px">[2022/09/16 16:37:35]</div><div class="ll" style="left:142px;top:308px">手动</div><div class="ll" style="left:178px;top:308px">进样阀: 进样</div><div class="ll" style="top:325px">[2022/09/16 16:42:56]</div><div class="ll" style="left:142px;top:325px">运行暂停</div><div class="ll" style="top:342px">[2022/09/16 16:44:14]</div><div class="ll" style="left:142px;top:342px">运行结束</div></div><div id="status" class="abs"><div class="abs" style="left:419px;top:1px;width:1px;height:14px;background:#a0a0a0"></div></div><div id="task" class="abs"><div class="abs" style="left:0;top:0;width:1920px;height:4px;background:linear-gradient(rgba(255,255,255,.55),rgba(255,255,255,0))"></div><svg class="abs" style="left:15px;top:11px" width="18" height="18" viewBox="0 0 18 18"><path d="M0 2.500l7.500-1v7H0zM8.500 1.300l9.500-1.300v8.500H8.500zM0 9.500h7.500v7l-7.500-1zM8.500 9.500H18V18l-9.500-1.300z" fill="#111"/></svg><div class="tb" style="left:50px;"><svg class="abs" style="left:11px;top:8px" width="23" height="23" viewBox="0 0 22 22"><defs><radialGradient id="yg" cx="50%" cy="35%" r="65%"><stop offset="0" stop-color="#ffe27a"/><stop offset="1" stop-color="#d89a10"/></radialGradient></defs><circle cx="11" cy="11" r="10" fill="url(#yg)" stroke="#7a5a10" stroke-width="1.200"/><circle cx="11" cy="11" r="2" fill="#222"/><path d="M11 11L6.500 4h9zM11 11l7.500 4-4.500 5zM11 11l-7.500 4 4.500 5z" fill="#222" opacity=".8"/></svg><div class="t">用户登录 V1.0.0.4</div><i></i></div><div class="tb" style="left:211px;"><svg class="abs" style="left:12px;top:8px" width="23" height="23" viewBox="0 0 22 22"><circle cx="11" cy="11" r="10" fill="#f4f4fa" stroke="#a8a8bc" stroke-width="1.500"/><circle cx="13.500" cy="13" r="5" fill="#e46060"/><circle cx="8" cy="8" r="3.500" fill="#6a94e6"/><path d="M5 15l5-6" stroke="#8ab" stroke-width="1.500"/></svg><div class="t">系统控制 V1.0.3.95</div><i></i></div><div class="tb act" style="left:372px;background:#e4f0f8;"><svg class="abs" style="left:12px;top:7px" width="22" height="25" viewBox="0 0 22 24"><ellipse cx="11" cy="12" rx="10" ry="11" fill="url(#pg)"/></svg><div class="t">数据分析 V1.0.0.22</div><i></i></div><div class="tb" style="left:533px;"><svg class="abs" style="left:11px;top:9px" width="24" height="22" viewBox="0 0 24 22"><rect x="7" y="1" width="16" height="20" rx="1.500" fill="#2b7cd3"/><path d="M7 6h16M7 11h16M7 16h16" stroke="#1a5fb8" stroke-width="1"/><rect x="0" y="5" width="13" height="13" rx="1" fill="#185abd"/><path d="M2.500 8l1.800 7 2.200-6 2.200 6 1.800-7" fill="none" stroke="#fff" stroke-width="1.400"/></svg><div class="t" style="letter-spacing:.7px">新建 Microsoft W...</div><i></i></div></div><svg class="abs" style="left:1459px;top:1048px" width="26" height="22" viewBox="0 0 26 22"><rect x="1" y="3" width="24" height="16" rx="2" fill="#4a4a4a"/><path d="M4 7h3M9 7h3M14 7h3M19 7h3M4 11h3M9 11h3M14 11h3M19 11h3M6 15h14" stroke="#d8d8d8" stroke-width="1.600"/></svg><svg class="abs" style="left:1497px;top:1049px" width="20" height="20" viewBox="0 0 20 20"><rect x="3" y="6" width="13" height="13" fill="#f0a040"/><rect x="8" y="6" width="3" height="13" fill="#e06020"/><circle cx="15" cy="4" r="3" fill="#e83030"/></svg><svg class="abs" style="left:1522px;top:1049px" width="20" height="20" viewBox="0 0 20 20"><circle cx="10" cy="10" r="9" fill="#1a6fe0"/><path d="M8 5v9h6" stroke="#fff" stroke-width="2.500" fill="none"/></svg><svg class="abs" style="left:1547px;top:1049px" width="20" height="20" viewBox="0 0 20 20"><rect x="1" y="3" width="18" height="14" fill="#f4f4f4" stroke="#b0b0c0"/><path d="M4 6h11l-10 8h11" stroke="#d02030" stroke-width="2.400" fill="none"/><rect x="12" y="10" width="6" height="6" fill="#2040c0"/></svg><svg class="abs" style="left:1570px;top:1049px" width="20" height="20" viewBox="0 0 20 20"><rect x="1" y="2" width="17" height="15" fill="#4a4a4a"/><rect x="4" y="5" width="7" height="6" fill="#e8e8e8"/><circle cx="15" cy="15" r="3.500" fill="#f09020"/></svg><svg class="abs" style="left:1593px;top:1049px" width="20" height="20" viewBox="0 0 20 20"><ellipse cx="10" cy="10" rx="6.500" ry="9.500" fill="#1a7ae8"/><path d="M7 6l6 7-3 3V4l3 3-6 7" stroke="#fff" stroke-width="1.300" fill="none"/></svg><svg class="abs" style="left:1617px;top:1049px" width="20" height="20" viewBox="0 0 20 20"><path d="M10 1l8 3v6c0 5-4 8-8 9-4-1-8-4-8-9V4z" fill="#e8e8e8" stroke="#555" stroke-width="1.500"/><path d="M10 3v15" stroke="#555"/><circle cx="13.500" cy="14" r="4.500" fill="#e02020"/><path d="M11 14h5" stroke="#fff" stroke-width="1.500"/></svg><svg class="abs" style="left:1642px;top:1049px" width="20" height="20" viewBox="0 0 20 20"><path d="M3 3l3 3h8l3-3v12H3z" fill="#b8b8c0" stroke="#888"/><path d="M11 17l4-5 4 5z" fill="#e02020"/></svg><svg class="abs" style="left:1665px;top:1049px" width="20" height="20" viewBox="0 0 20 20"><rect x="2" y="3" width="16" height="14" rx="2" fill="#c8c8c8" stroke="#8a8a8a"/><path d="M5 8h6M9 12h6" stroke="#fff" stroke-width="2"/></svg><svg class="abs" style="left:1691px;top:1049px" width="20" height="20" viewBox="0 0 20 20"><circle cx="10" cy="10" r="8.500" fill="#e4e4e4" stroke="#4a4a4a" stroke-width="2"/><path d="M10 1.500v17M1.500 10h17M4 4c4 3 8 3 12 0M4 16c4-3 8-3 12 0" stroke="#4a4a4a" stroke-width="1.400" fill="none"/><circle cx="14" cy="14" r="3" fill="#4a4a4a"/></svg><svg class="abs" style="left:1714px;top:1049px" width="20" height="20" viewBox="0 0 20 20"><path d="M2 7h4l5-4v14l-5-4H2z" fill="#555"/><path d="M13 6c2 2 2 6 0 8M15.500 4c3 3 3 9 0 12" stroke="#555" stroke-width="1.400" fill="none"/></svg><svg class="abs" style="left:1738px;top:1049px" width="20" height="20" viewBox="0 0 20 20"><rect x="7" y="2" width="6" height="11" rx="3" fill="#b0b8c0"/><path d="M4 9c0 8 12 8 12 0M10 15v4" stroke="#b0b8c0" stroke-width="1.600" fill="none"/></svg><svg class="abs" style="left:1768px;top:1049px" width="20" height="20" viewBox="0 0 20 20"><rect x="2" y="2" width="16" height="16" rx="4" fill="#f4581e" transform="rotate(-12 10 10)"/><path d="M13.500 6.500c-4-2-8 0-6 2.500s7 2 5.500 4.500-5 1.500-6.500.5" stroke="#fff" stroke-width="2" fill="none"/></svg><div class="t" style="left:1795px;top:1044px;font-size:12px;width:70px;text-align:center;color:#222">17:08</div><div class="t" style="left:1795px;top:1064px;font-size:12px;width:70px;text-align:center;color:#222">2022/9/16</div><svg class="abs" style="left:1879px;top:1047px" width="24" height="24" viewBox="0 0 24 24"><path d="M1 2h17v13h-5l-3 3v-3H1z" fill="#222"/><path d="M4 6h11M4 9h11M4 12h7" stroke="#cfd8e0" stroke-width="1.200"/><circle cx="17" cy="17" r="5.500" fill="#e8eef2" stroke="#555"/></svg><div class="t" style="left:1893px;top:1066px;font-size:9px;color:#222">4</div><div class="abs" style="left:1722px;top:1013px;width:198px;height:28px;background:#fff"></div><svg class="abs" style="left:1714px;top:1011px" width="31" height="31" viewBox="0 0 30 30"><rect x="3" y="3" width="24" height="24" rx="5" fill="#f4521c" transform="rotate(-12 15 15)"/><path d="M21 9.500c-6-3.500-13-.5-10.500 3.500s11 2.500 9.500 7-9 3-11.500 1" stroke="#fff" stroke-width="3.200" fill="none"/></svg><div class="t" style="left:1747px;top:1020px;font-size:16.5px;font-weight:bold;color:#1f76e6">中</div><svg class="abs" style="left:1767px;top:1018px" width="20" height="20" viewBox="0 0 20 20"><circle cx="6.500" cy="7" r="2.300" fill="#1f76e6"/><path d="M11.500 12.500a2.300 2.300 0 1 1 3.800 1.700c-.3 1.800-1.300 3-3 3.600.9-.9 1.300-1.900 1.200-3.100a2.300 2.300 0 0 1-2-2.200z" fill="#1f76e6"/></svg><svg class="abs" style="left:1789px;top:1018px" width="20" height="20" viewBox="0 0 20 20"><circle cx="10" cy="10" r="8.300" fill="#e6f0fd" stroke="#2a7ce8" stroke-width="2"/><path d="M5.500 7l2 6.500 2.500-5 2.500 5 2-6.500" stroke="#2a7ce8" stroke-width="1.500" fill="none"/></svg><svg class="abs" style="left:1811px;top:1018px" width="20" height="20" viewBox="0 0 20 20"><rect x="6.500" y="1" width="7" height="11.500" rx="3.500" fill="#1f76e6"/><path d="M4 9c0 8 12 8 12 0M10 15v4" stroke="#1f76e6" stroke-width="1.900" fill="none"/></svg><svg class="abs" style="left:1832px;top:1018px" width="21" height="20" viewBox="0 0 21 20"><rect x="1" y="4" width="19" height="13" rx="2" fill="#3b86ea"/><rect x="3.500" y="6.500" width="14" height="8" fill="#7fb2f2"/><path d="M5 9h10M5 12h10" stroke="#d8e8fb" stroke-width="1.300"/></svg><svg class="abs" style="left:1855px;top:1018px" width="20" height="20" viewBox="0 0 20 20"><circle cx="8.500" cy="5.500" r="3.200" fill="#b4bfcc"/><path d="M2.500 17c0-7.500 12-7.500 12 0z" fill="#b4bfcc"/><circle cx="14.500" cy="15" r="3.600" fill="#e4e9ee" stroke="#b4bfcc" stroke-width="1.200"/></svg><svg class="abs" style="left:1877px;top:1018px" width="20" height="20" viewBox="0 0 20 20"><path d="M6 2l4 2 4-2 5 4-3 3-1-1v10H5V8L4 9 1 6z" fill="#1f76e6"/></svg><svg class="abs" style="left:1899px;top:1018px" width="19" height="20" viewBox="0 0 19 20"><rect x="1" y="1.500" width="7.500" height="7.500" fill="#1f76e6"/><rect x="10.500" y="1.500" width="7.500" height="7.500" fill="#1f76e6"/><rect x="1" y="11" width="7.500" height="7.500" fill="#1f76e6"/><rect x="10.500" y="11" width="7.500" height="7.500" fill="#1f76e6"/><rect x="12.500" y="3.500" width="3.500" height="3.500" fill="#cfe2fb"/></svg><div class="abs" style="left:1912px;top:978px;width:8px;height:38px;border:2px solid #606060;border-right:none;border-radius:4px 0 0 4px;background:linear-gradient(#fff 0,#fff 47%,#f08030 47%,#f08030 100%)"></div></div></body></html>
